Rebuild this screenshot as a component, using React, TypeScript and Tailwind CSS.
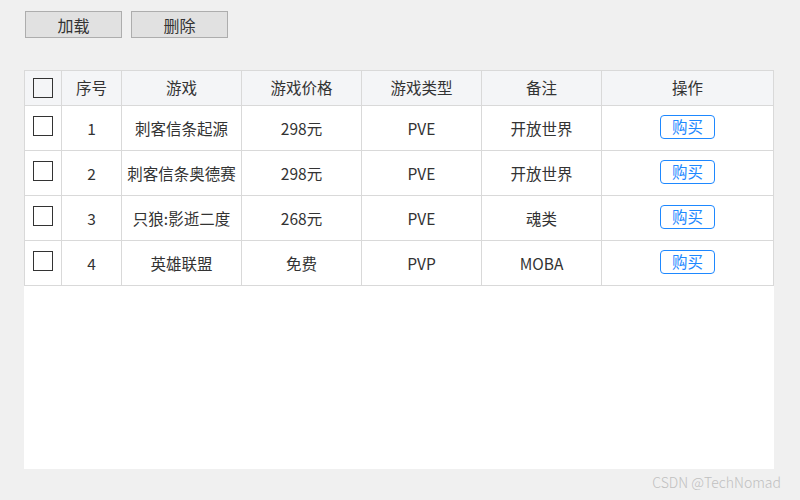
import React from "react";

interface Game {
  id: number;
  name: string;
  price: string;
  type: string;
  note: string;
}

const games: Game[] = [
  { id: 1, name: "刺客信条起源", price: "298元", type: "PVE", note: "开放世界" },
  { id: 2, name: "刺客信条奥德赛", price: "298元", type: "PVE", note: "开放世界" },
  { id: 3, name: "只狼:影逝二度", price: "268元", type: "PVE", note: "魂类" },
  { id: 4, name: "英雄联盟", price: "免费", type: "PVP", note: "MOBA" },
];

const font = { fontFamily: '"Noto Sans CJK SC", "Noto Sans", sans-serif' };

const Box = () => <div className="mx-auto h-[20px] w-[20px] border-[1.5px] border-[#333]" />;

export default function App() {
  return (
    <div className="relative h-[500px] w-[800px] bg-[#f0f0f0] text-[#333]" style={font}>
      <div className="flex gap-[9px] pl-[25px] pt-[11px]">
        <button className="h-[27px] w-[97px] border border-[#adadad] bg-[#e1e1e1] text-[16px] leading-none text-[#333]">
          加载
        </button>
        <button className="h-[27px] w-[97px] border border-[#adadad] bg-[#e1e1e1] text-[16px] leading-none text-[#333]">
          删除
        </button>
      </div>

      <div className="ml-[24px] mt-[32px] h-[399px] w-[750px] bg-white">
        <table className="w-[749px] table-fixed border-collapse text-[15.5px]">
          <colgroup>
            <col className="w-[37px]" />
            <col className="w-[60px]" />
            <col className="w-[120px]" />
            <col className="w-[120px]" />
            <col className="w-[120px]" />
            <col className="w-[120px]" />
            <col className="w-[172px]" />
          </colgroup>
          <thead>
            <tr className="h-[35px] bg-[#f4f5f7]">
              <th className="border border-[#d9d9d9] p-0"><Box /></th>
              {["序号", "游戏", "游戏价格", "游戏类型", "备注", "操作"].map((h) => (
                <th key={h} className="border border-[#d9d9d9] p-0 text-center font-normal">
                  {h}
                </th>
              ))}
            </tr>
          </thead>
          <tbody>
            {games.map((g) => (
              <tr key={g.id} className="h-[45px]">
                <td className="border border-[#d9d9d9] p-0 align-top pt-[10px]"><Box /></td>
                <td className="border border-[#d9d9d9] p-0 pt-[2px] text-center">{g.id}</td>
                <td className="border border-[#d9d9d9] p-0 pt-[2px] text-center whitespace-nowrap">{g.name}</td>
                <td className="border border-[#d9d9d9] p-0 pt-[2px] text-center">{g.price}</td>
                <td className="border border-[#d9d9d9] p-0 pt-[2px] text-center">{g.type}</td>
                <td className="border border-[#d9d9d9] p-0 pt-[2px] text-center">{g.note}</td>
                <td className="border border-[#d9d9d9] p-0 text-center">
                  <button className="mx-auto mb-[3px] flex h-[24px] w-[55px] items-center justify-center rounded-[4px] border border-[#1e88ff] text-[15.5px] leading-none text-[#1e88ff]">
                    购买
                  </button>
                </td>
              </tr>
            ))}
          </tbody>
        </table>
      </div>

      <div className="absolute bottom-[7px] right-[19px] text-[14px] font-light text-[#c0c0c0]">
        CSDN @TechNomad
      </div>
    </div>
  );
}
